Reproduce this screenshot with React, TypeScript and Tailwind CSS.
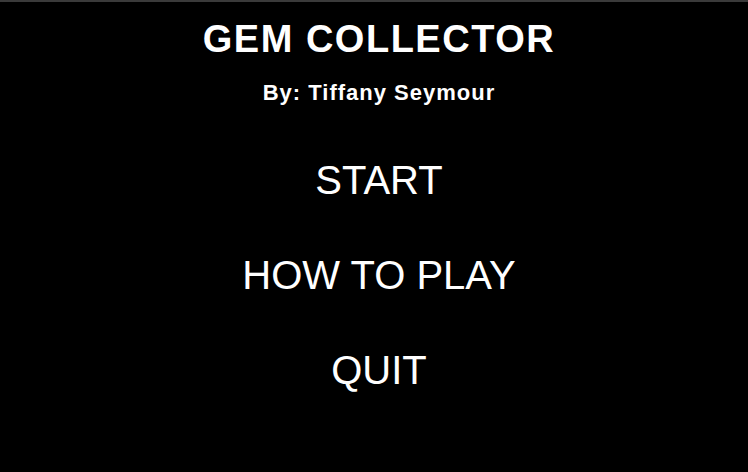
import React from 'react';

const menuItems = ['START', 'HOW TO PLAY', 'QUIT'];

const App = () => {
  return (
    <div
      className="w-full h-[472px] bg-black border-t-2 border-[#3a3a3a] text-white overflow-hidden"
      style={{ fontFamily: '"Liberation Sans", Arial, sans-serif' }}
    >
      <div className="flex flex-col items-center pt-[18px] pl-[10px]">
        {/* Title */}
        <h1 className="text-[38px] leading-none font-bold tracking-[1.5px]">GEM COLLECTOR</h1>
        <p className="mt-[24px] text-[22px] leading-none font-bold tracking-[1px]">By: Tiffany Seymour</p>

        {/* Menu */}
        <ul className="mt-[56px] flex flex-col items-center gap-[55px]">
          {menuItems.map((item) => (
            <li key={item} className="text-[40px] leading-none cursor-pointer">
              {item}
            </li>
          ))}
        </ul>
      </div>
    </div>
  );
};

export default App;
